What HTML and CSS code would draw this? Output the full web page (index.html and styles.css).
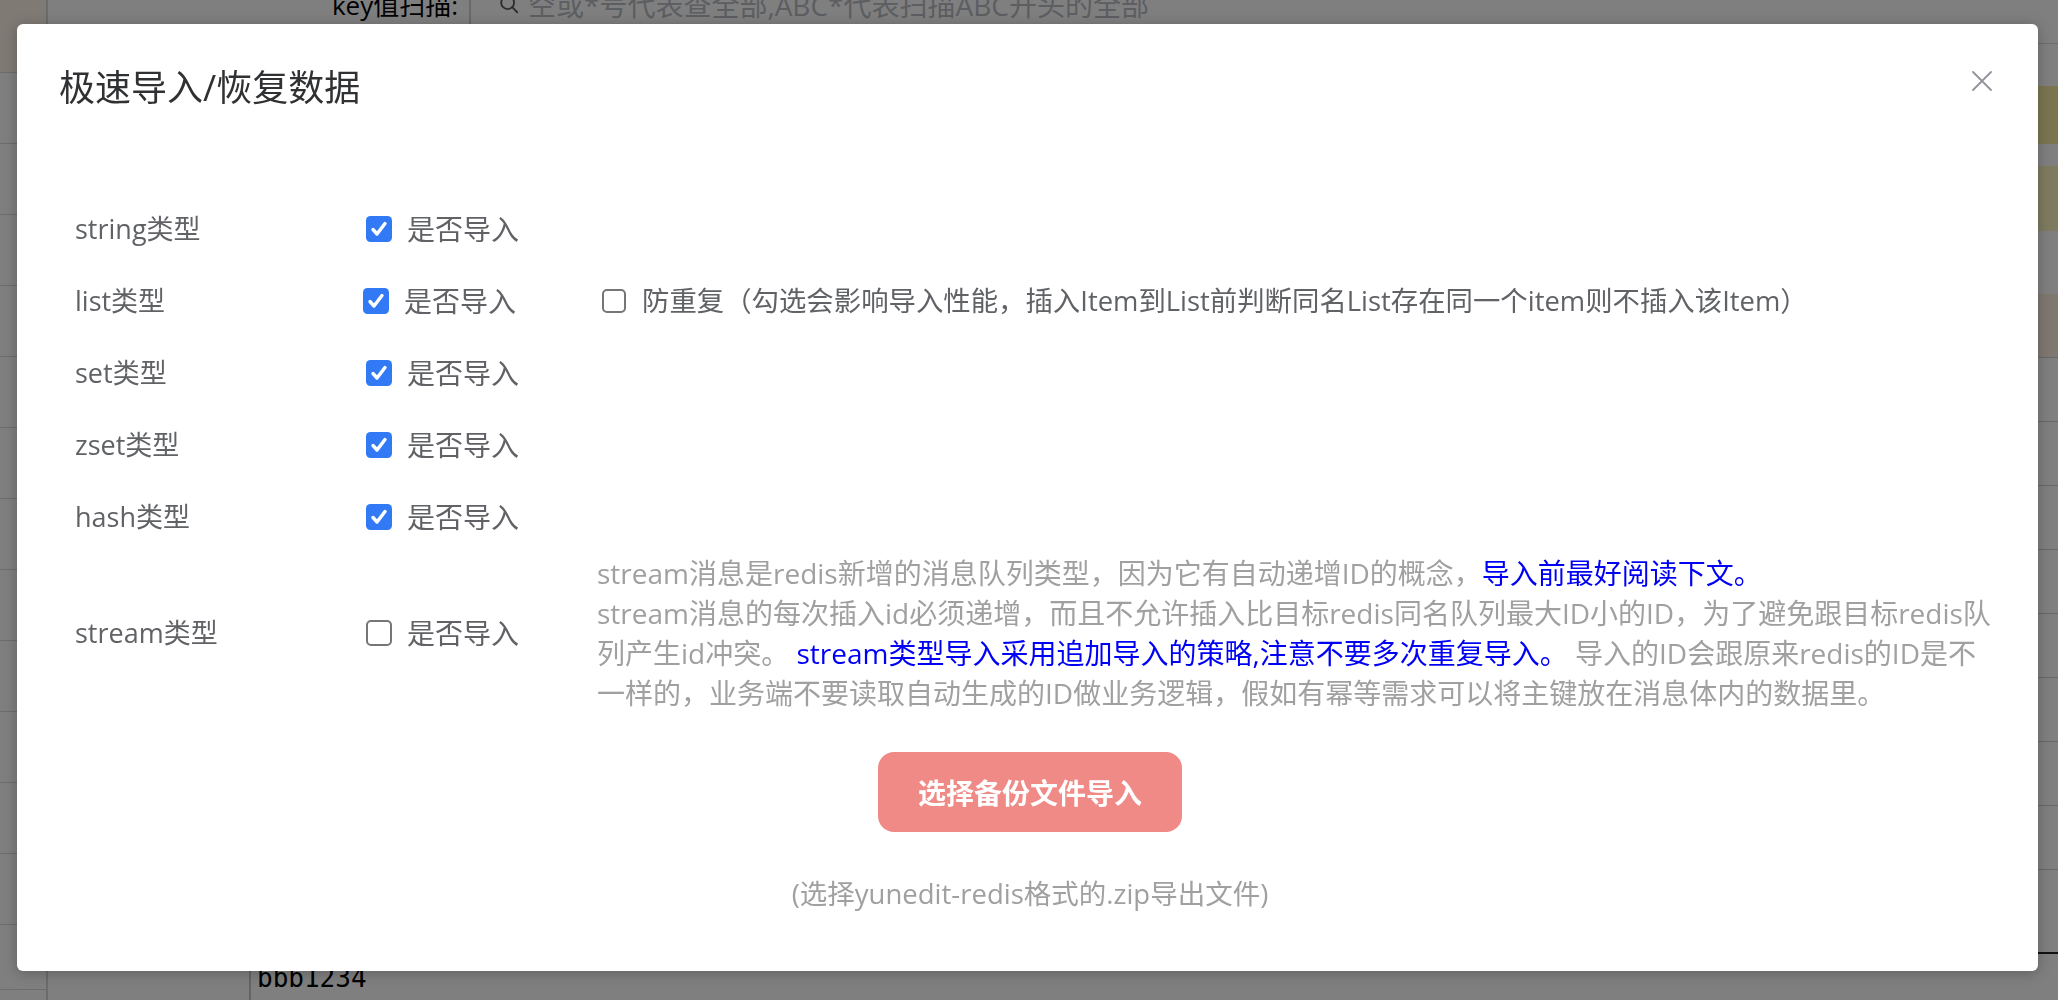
FILE: index.html
```html
<!DOCTYPE html>
<html lang="zh-CN">
<head>
<meta charset="utf-8">
<title>极速导入/恢复数据</title>
<link rel="stylesheet" href="styles.css">
</head>
<body>
<div class="page">
  <aside class="side">
    <div class="side-row side-row--head"></div>
    <div class="side-row"></div>
    <div class="side-row"></div>
    <div class="side-row"></div>
    <div class="side-row"></div>
    <div class="side-row"></div>
    <div class="side-row"></div>
    <div class="side-row"></div>
    <div class="side-row"></div>
    <div class="side-row"></div>
    <div class="side-row"></div>
    <div class="side-row"></div>
    <div class="side-row"></div>
    <div class="side-row side-row--last"></div>
  </aside>
  <main class="main">
    <div class="search-bar">
      <label class="search-label">key值扫描:</label>
      <div class="search-input">
        <svg class="search-icon" viewBox="0 0 24 24" width="22" height="22"><circle cx="10.5" cy="10.5" r="7" fill="none" stroke="#5a5a5a" stroke-width="2"/><path d="M15.5 15.5L21 21" stroke="#5a5a5a" stroke-width="2" stroke-linecap="round"/></svg>
        <span class="placeholder">空或*号代表查全部,ABC*代表扫描ABC开头的全部</span>
      </div>
    </div>
    <div class="main-body">
      <div class="key-col"></div>
      <div class="val-col">
        <div class="val-text">bbb1234</div>
      </div>
      <div class="right-col">
        <div class="rc rc-a"></div>
        <div class="rc rc-olive"></div>
        <div class="rc rc-b"></div>
        <div class="rc rc-olive2"></div>
        <div class="rc rc-c"></div>
        <div class="rc rc-brown"></div>
        <div class="rc rc-row"></div>
        <div class="rc rc-row"></div>
        <div class="rc rc-row"></div>
        <div class="rc rc-row"></div>
        <div class="rc rc-row"></div>
        <div class="rc rc-row"></div>
        <div class="rc rc-row"></div>
        <div class="rc rc-row"></div>
        <div class="rc rc-tall"></div>
      </div>
    </div>
  </main>
</div>

<div class="overlay"></div>

<div class="dialog" role="dialog">
  <div class="dialog-header">
    <h2 class="dialog-title">极速导入/恢复数据</h2>
    <button class="dialog-close" aria-label="关闭">
      <svg viewBox="0 0 22 22" width="22" height="22"><path d="M2 2L20 20M20 2L2 20" stroke="#909399" stroke-width="1.8" stroke-linecap="round"/></svg>
    </button>
  </div>
  <div class="dialog-body">
    <div class="row">
      <div class="col-label">string类型</div>
      <label class="col-check"><span class="cb cb--on"><svg viewBox="0 0 26 26" width="26" height="26"><rect width="26" height="26" rx="4.5" fill="#3179f5"/><path d="M7 13.5L11 18L19 7.5" fill="none" stroke="#fff" stroke-width="3.4" stroke-linecap="round" stroke-linejoin="round"/></svg></span>是否导入</label>
    </div>
    <div class="row">
      <div class="col-label">list类型</div>
      <label class="col-check col-check--shift"><span class="cb cb--on"><svg viewBox="0 0 26 26" width="26" height="26"><rect width="26" height="26" rx="4.5" fill="#3179f5"/><path d="M7 13.5L11 18L19 7.5" fill="none" stroke="#fff" stroke-width="3.4" stroke-linecap="round" stroke-linejoin="round"/></svg></span>是否导入</label>
      <label class="col-extra"><span class="cb cb--off cb--small"></span>防重复（勾选会影响导入性能，插入Item到List前判断同名List存在同一个item则不插入该Item）</label>
    </div>
    <div class="row">
      <div class="col-label">set类型</div>
      <label class="col-check"><span class="cb cb--on"><svg viewBox="0 0 26 26" width="26" height="26"><rect width="26" height="26" rx="4.5" fill="#3179f5"/><path d="M7 13.5L11 18L19 7.5" fill="none" stroke="#fff" stroke-width="3.4" stroke-linecap="round" stroke-linejoin="round"/></svg></span>是否导入</label>
    </div>
    <div class="row">
      <div class="col-label">zset类型</div>
      <label class="col-check"><span class="cb cb--on"><svg viewBox="0 0 26 26" width="26" height="26"><rect width="26" height="26" rx="4.5" fill="#3179f5"/><path d="M7 13.5L11 18L19 7.5" fill="none" stroke="#fff" stroke-width="3.4" stroke-linecap="round" stroke-linejoin="round"/></svg></span>是否导入</label>
    </div>
    <div class="row">
      <div class="col-label">hash类型</div>
      <label class="col-check"><span class="cb cb--on"><svg viewBox="0 0 26 26" width="26" height="26"><rect width="26" height="26" rx="4.5" fill="#3179f5"/><path d="M7 13.5L11 18L19 7.5" fill="none" stroke="#fff" stroke-width="3.4" stroke-linecap="round" stroke-linejoin="round"/></svg></span>是否导入</label>
    </div>
    <div class="row row--stream">
      <div class="col-label">stream类型</div>
      <label class="col-check"><span class="cb cb--off"></span>是否导入</label>
      <div class="col-desc">
        <p class="desc-line">stream消息是redis新增的消息队列类型，因为它有自动递增ID的概念，<span class="em">导入前最好阅读下文。</span></p>
        <p class="desc-line">stream消息的每次插入id必须递增，而且不允许插入比目标redis同名队列最大ID小的ID，为了避免跟目标redis队</p>
        <p class="desc-line">列产生id冲突。 <span class="em">stream类型导入采用追加导入的策略,注意不要多次重复导入。</span> 导入的ID会跟原来redis的ID是不</p>
        <p class="desc-line">一样的，业务端不要读取自动生成的ID做业务逻辑，假如有幂等需求可以将主键放在消息体内的数据里。</p>
      </div>
    </div>
    <button class="import-btn">选择备份文件导入</button>
    <p class="hint">(选择yunedit-redis格式的.zip导出文件)</p>
  </div>
</div>
</body>
</html>
```

FILE: styles.css
```css
html, body {
  margin: 0;
  padding: 0;
  width: 100%;
  height: 100%;
  overflow: hidden;
}
body {
  background: #ffffff;
  font-family: "Open Sans", "Noto Sans CJK SC", sans-serif;
}

/* ---------- underlying page ---------- */
.page {
  display: flex;
  height: 1000px;
}
.side {
  width: 46px;
  border-right: 2px solid #d6d6d6;
  display: flex;
  flex-direction: column;
  flex-shrink: 0;
}
.side-row {
  height: 70px;
  border-bottom: 1px solid #d8d8d8;
  flex-shrink: 0;
}
.side-row--head {
  height: 72px;
  background: #fff4e8;
}
.side-row--last {
  height: 64px;
}
.main {
  flex: 1;
  display: flex;
  flex-direction: column;
  min-width: 0;
}
.search-bar {
  height: 79px;
  margin-top: -36px;
  display: flex;
  align-items: center;
  border-bottom: 1px solid #dcdcdc;
  flex-shrink: 0;
}
.search-label {
  width: 421px;
  text-align: right;
  font-size: 26px;
  color: #000;
  padding-right: 11px;
  box-sizing: border-box;
  flex-shrink: 0;
}
.search-input {
  display: flex;
  align-items: center;
  gap: 8px;
  height: 52px;
  padding-left: 27px;
  border-left: 2px solid #d0d0d0;
  flex: 1;
}
.placeholder {
  font-size: 28px;
  color: #b8bcc4;
}
.main-body {
  flex: 1;
  display: flex;
  min-height: 0;
}
.key-col {
  width: 201px;
  flex-shrink: 0;
}
.val-col {
  flex: 1;
  border-left: 2px solid #c8c8c8;
  display: flex;
  flex-direction: column;
  justify-content: flex-end;
  padding-left: 6px;
}
.val-text {
  font-family: "DejaVu Sans Mono", monospace;
  font-size: 26px;
  line-height: 40px;
  height: 40px;
  margin-bottom: 2px;
  color: #000;
}
.right-col {
  width: 120px;
  flex-shrink: 0;
  display: flex;
  flex-direction: column;
}
.rc { flex-shrink: 0; }
.rc-a { height: 42px; }
.rc-olive { height: 58px; background: #f6eca0; }
.rc-b { height: 22px; }
.rc-olive2 { height: 65px; background: #fcf6c0; }
.rc-c { height: 63px; }
.rc-brown { height: 63px; background: #fef0e2; border-bottom: 1px solid #d0d0d0; }
.rc-row { height: 63px; border-bottom: 1px solid #d0d0d0; }
.rc-tall { height: 82px; border-bottom: 2px solid #222; }

/* ---------- overlay ---------- */
.overlay {
  position: fixed;
  inset: 0;
  background: rgba(0, 0, 0, 0.5);
}

/* ---------- dialog ---------- */
.dialog {
  position: absolute;
  left: 17px;
  top: 24px;
  width: 2021px;
  height: 947px;
  background: #fff;
  border-radius: 6px;
  box-shadow: 0 2px 14px rgba(0, 0, 0, 0.25);
  box-sizing: border-box;
}
.dialog-header {
  position: relative;
  padding: 40px 42px 0;
}
.dialog-title {
  margin: 0;
  font-size: 36px;
  line-height: 48px;
  font-weight: normal;
  color: #303133;
}
.dialog-close {
  position: absolute;
  right: 45px;
  top: 46px;
  width: 22px;
  height: 22px;
  padding: 0;
  border: 0;
  background: none;
}
.dialog-close svg { display: block; }

.dialog-body {
  padding: 81px 53px 0 58px;
  font-size: 28px;
  color: #606266;
}
.row {
  display: flex;
  align-items: center;
  height: 72px;
}
.row--stream {
  height: 160px;
}
.col-label {
  width: 291px;
  flex-shrink: 0;
  font-size: 27px;
  line-height: 40px;
}
.col-check {
  width: 231px;
  flex-shrink: 0;
  display: flex;
  align-items: center;
  gap: 15px;
  line-height: 40px;
}
.col-check--shift {
  margin-left: -3px;
  width: 234px;
}
.cb {
  width: 26px;
  height: 26px;
  flex-shrink: 0;
  box-sizing: border-box;
  display: block;
}
.cb svg { display: block; }
.cb--off {
  border: 2px solid #767676;
  border-radius: 5px;
  background: #fff;
}
.cb--small {
  width: 24px;
  height: 24px;
}
.col-extra {
  display: flex;
  align-items: center;
  gap: 16px;
  margin-left: 5px;
  font-size: 27.4px;
  line-height: 40px;
  white-space: nowrap;
}
.col-desc {
  flex: 1;
  color: #a0a0a0;
  font-size: 28px;
  line-height: 40px;
}
.desc-line {
  margin: 0;
  white-space: nowrap;
}
.em {
  color: #0000f5;
}
.import-btn {
  display: block;
  margin: 39px auto 0;
  width: 304px;
  height: 80px;
  border: 0;
  border-radius: 16px;
  background: #ef8a86;
  color: #fff;
  font-family: "Open Sans", "Noto Sans CJK SC", sans-serif;
  font-size: 28px;
  font-weight: bold;
}
.hint {
  margin: 42px 0 0;
  text-align: center;
  font-size: 27.5px;
  line-height: 40px;
  color: #a0a0a0;
}
```
